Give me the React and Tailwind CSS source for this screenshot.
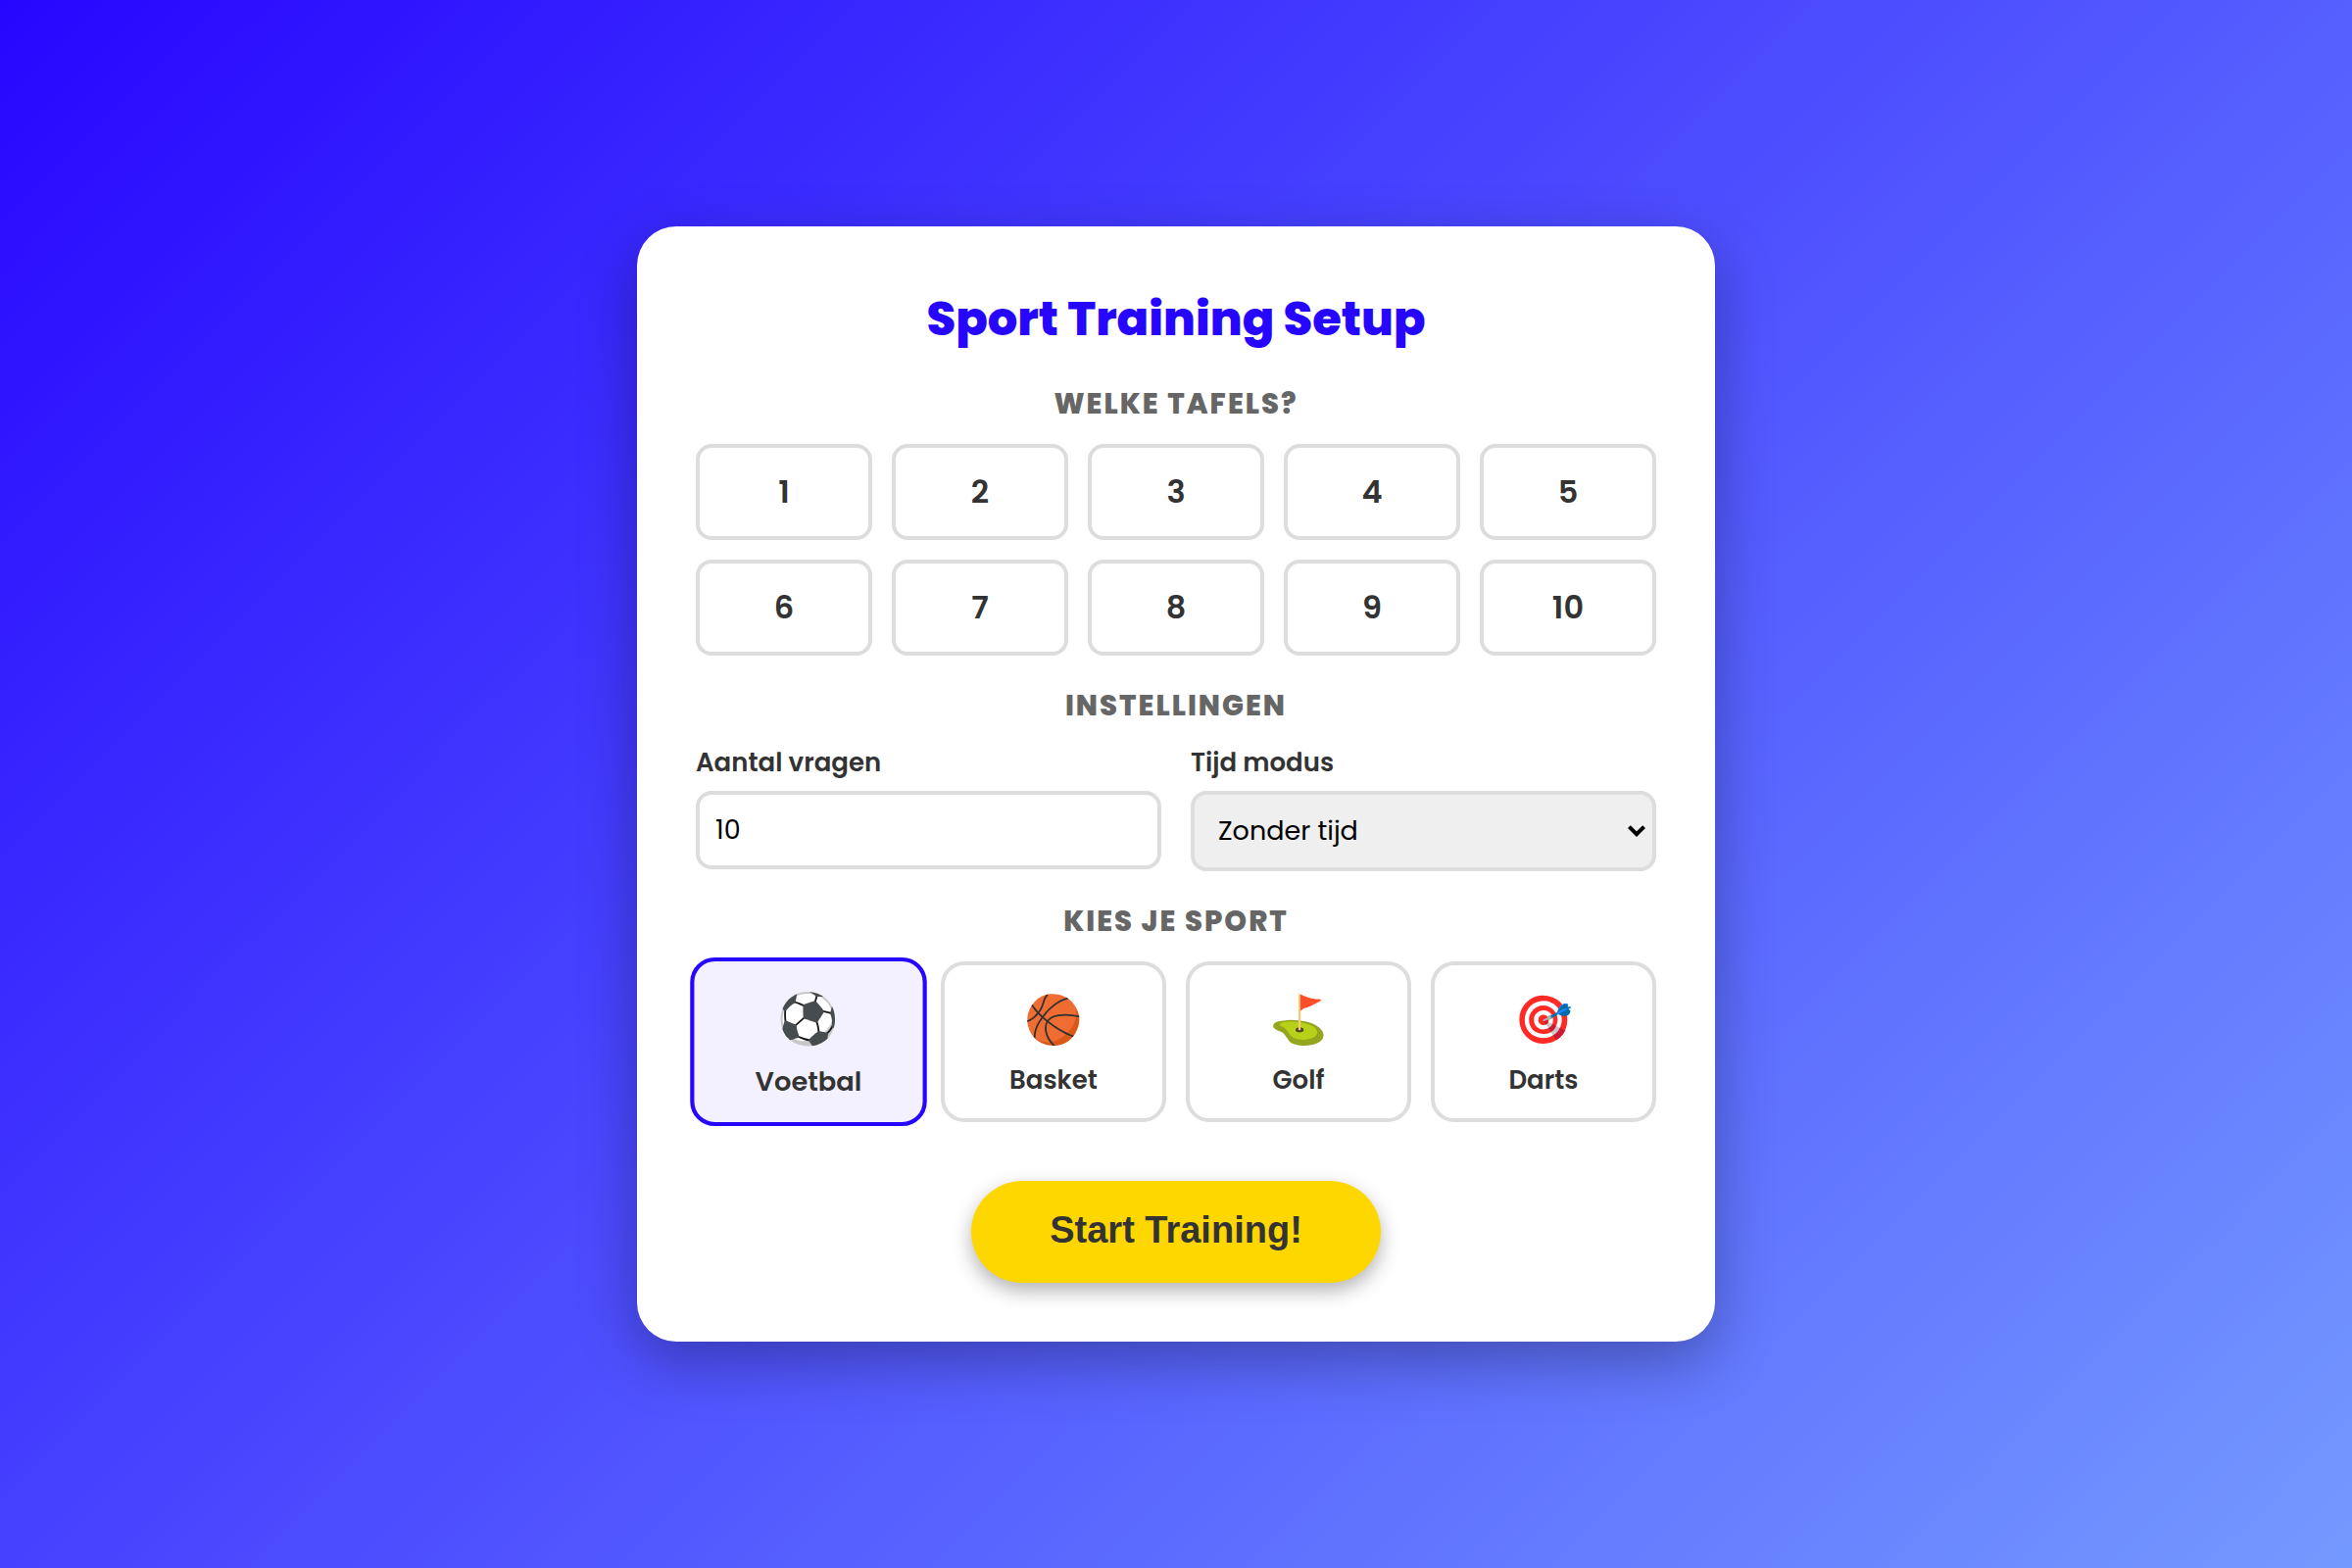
import React, { useState } from "react";

const tables = [1, 2, 3, 4, 5, 6, 7, 8, 9, 10];

const sports = [
  { id: "voetbal", label: "Voetbal", icon: "⚽" },
  { id: "basket", label: "Basket", icon: "🏀" },
  { id: "golf", label: "Golf", icon: "⛳" },
  { id: "darts", label: "Darts", icon: "🎯" },
];

const SectionTitle = ({ children }) => (
  <h2 className="mt-7 mb-[18px] text-center text-[29px] leading-[46px] font-extrabold tracking-[2px] text-[#666] uppercase">
    {children}
  </h2>
);

const TableButton = ({ value, active, onClick }) => (
  <button
    type="button"
    aria-pressed={active}
    onClick={onClick}
    className={`h-[98px] rounded-2xl border-4 text-[32px] font-semibold ${
      active ? "border-[#2706ff] bg-[#2706ff] text-white" : "border-[#ddd] bg-white text-[#333]"
    }`}
  >
    {value}
  </button>
);

const SportCard = ({ sport, active, onClick }) => (
  <button
    type="button"
    aria-pressed={active}
    onClick={onClick}
    className={`flex flex-col items-center rounded-3xl border-4 py-5 text-[#333] ${
      active ? "scale-105 border-[#2706ff] bg-[#f3f0ff]" : "border-[#ddd] bg-white"
    }`}
  >
    <span className="text-[48px] leading-[72px]">{sport.icon}</span>
    <span className="mt-1.5 text-[26px] leading-[38px] font-semibold">{sport.label}</span>
  </button>
);

const App = () => {
  const [selectedTables, setSelectedTables] = useState([]);
  const [questions, setQuestions] = useState(10);
  const [timeMode, setTimeMode] = useState("none");
  const [sport, setSport] = useState("voetbal");

  const toggleTable = (n) => {
    setSelectedTables((prev) =>
      prev.includes(n) ? prev.filter((t) => t !== n) : [...prev, n]
    );
  };

  return (
    <main className="flex min-h-screen items-center justify-center bg-linear-[135deg,#2706ff,#7499ff] font-[Poppins,Inter,sans-serif]">
      <div className="w-full max-w-[1100px] rounded-[40px] bg-white p-[60px] shadow-[0_20px_60px_rgba(0,0,0,0.3)]">
        <h1 className="text-center text-[48px] leading-[70px] font-extrabold text-[#2706ff]">
          Sport Training Setup
        </h1>

        <SectionTitle>Welke tafels?</SectionTitle>
        <div className="grid grid-cols-5 gap-5">
          {tables.map((n) => (
            <TableButton
              key={n}
              value={n}
              active={selectedTables.includes(n)}
              onClick={() => toggleTable(n)}
            />
          ))}
        </div>

        <SectionTitle>Instellingen</SectionTitle>
        <div className="grid grid-cols-2 items-start gap-[30px]">
          <div className="flex flex-col gap-3">
            <label htmlFor="questions" className="text-[26px] leading-[34px] font-semibold text-[#333]">
              Aantal vragen
            </label>
            <input
              id="questions"
              type="number"
              value={questions}
              onChange={(e) => setQuestions(e.target.value)}
              className="h-20 rounded-2xl border-4 border-[#ddd] bg-white px-4 text-[27px] text-black"
            />
          </div>
          <div className="flex flex-col gap-3">
            <label htmlFor="time-mode" className="text-[26px] leading-[34px] font-semibold text-[#333]">
              Tijd modus
            </label>
            <div className="relative">
              <select
                id="time-mode"
                value={timeMode}
                onChange={(e) => setTimeMode(e.target.value)}
                className="h-[82px] w-full appearance-none rounded-2xl border-4 border-[#ddd] bg-[#efefef] px-6 text-[27px] text-black"
              >
                <option value="none">Zonder tijd</option>
                <option value="timed">Met tijd</option>
              </select>
              <svg
                viewBox="0 0 18 12"
                fill="none"
                stroke="black"
                strokeWidth="4"
                aria-hidden="true"
                className="pointer-events-none absolute top-1/2 right-[11px] h-3 w-[18px] -translate-y-1/2"
              >
                <path d="M1.4 1.6 9 9.2l7.6-7.6" />
              </svg>
            </div>
          </div>
        </div>

        <SectionTitle>Kies je sport</SectionTitle>
        <div className="grid grid-cols-4 gap-5">
          {sports.map((s) => (
            <SportCard key={s.id} sport={s} active={sport === s.id} onClick={() => setSport(s.id)} />
          ))}
        </div>

        <div className="mt-[60px] flex justify-center">
          <button
            type="button"
            className="rounded-full bg-[#ffd700] px-20 pt-7 pb-8 font-['Liberation_Sans',sans-serif] text-[38px] leading-[44px] font-bold text-[#333] shadow-[0_8px_20px_rgba(0,0,0,0.3)]"
          >
            Start Training!
          </button>
        </div>
      </div>
    </main>
  );
};

export default App;
